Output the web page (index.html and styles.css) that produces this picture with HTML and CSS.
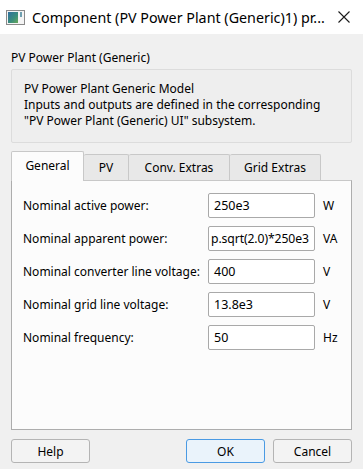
FILE: index.html
```html
<!DOCTYPE html>
<html lang="en">
<head>
    <meta charset="UTF-8">
    <title>Component (PV Power Plant (Generic)1) properties</title>
    <link rel="stylesheet" href="styles.css">
</head>
<body>

    <!-- Window title bar -->
    <div class="titlebar">
        <svg class="app-icon" width="19" height="15" viewBox="0 0 19 15">
            <defs>
                <linearGradient id="ig" x1="0" y1="0" x2="1" y2="1">
                    <stop offset="0" stop-color="#2f6fa0"/>
                    <stop offset="0.6" stop-color="#3b8f7a"/>
                    <stop offset="1" stop-color="#6aa85a"/>
                </linearGradient>
            </defs>
            <rect x="0.5" y="0.5" width="18" height="14" fill="#f4f4f4" stroke="#8a8a8a"/>
            <rect x="2" y="2" width="10" height="11" fill="url(#ig)"/>
            <rect x="14" y="2" width="2" height="5" fill="#6f9fb0"/>
        </svg>
        <div class="title-text">Component (PV Power Plant (Generic)1) pr...</div>
        <svg class="close-x" width="12" height="12" viewBox="0 0 12 12">
            <path d="M0.5 0.5 L11.5 11.5 M11.5 0.5 L0.5 11.5" stroke="#1a1a1a" stroke-width="1.1"/>
        </svg>
    </div>

    <div class="content">
        <div class="group-label">PV Power Plant (Generic)</div>

        <div class="desc-box">
            PV Power Plant Generic Model<br>
            Inputs and outputs are defined in the corresponding<br>
            "PV Power Plant (Generic) UI" subsystem.
        </div>

        <!-- Tabs -->
        <div class="tabs">
            <div class="tab active" style="width: 73px;">General</div>
            <div class="tab" style="width: 45px;">PV</div>
            <div class="tab" style="width: 101px;">Conv. Extras</div>
            <div class="tab" style="width: 91px;">Grid Extras</div>
        </div>

        <div class="panel">
            <div class="row">
                <div class="label">Nominal active power:</div>
                <div class="field">250e3</div>
                <div class="unit">W</div>
            </div>
            <div class="row">
                <div class="label">Nominal apparent power:</div>
                <div class="field tight">p.sqrt(2.0)*250e3</div>
                <div class="unit">VA</div>
            </div>
            <div class="row">
                <div class="label">Nominal converter line voltage:</div>
                <div class="field">400</div>
                <div class="unit">V</div>
            </div>
            <div class="row">
                <div class="label">Nominal grid line voltage:</div>
                <div class="field">13.8e3</div>
                <div class="unit">V</div>
            </div>
            <div class="row">
                <div class="label">Nominal frequency:</div>
                <div class="field">50</div>
                <div class="unit">Hz</div>
            </div>
        </div>

        <!-- Dialog buttons -->
        <div class="buttons">
            <button class="btn">Help</button>
            <div class="spacer"></div>
            <button class="btn default">OK</button>
            <button class="btn">Cancel</button>
        </div>
    </div>

</body>
</html>
```

FILE: styles.css
```css
body {
    margin: 0;
    padding: 0;
    width: 363px;
    height: 469px;
    background-color: #f0f0f0;
    color: #000;
    font-family: "Noto Sans", "Open Sans", sans-serif;
    font-size: 12px;
    overflow: hidden;
}

/* Title bar */
.titlebar {
    height: 34px;
    background-color: #fff;
    display: flex;
    align-items: center;
    padding-left: 6px;
}

.app-icon {
    margin-top: 1px;
}

.title-text {
    margin-left: 7px;
    font-size: 14.3px;
    color: #000;
    white-space: nowrap;
}

.close-x {
    margin-left: auto;
    margin-right: 13px;
}

/* Main area */
.content {
    padding: 0 11px;
}

.group-label {
    margin-top: 16px;
    line-height: 16px;
    height: 19px;
}

.desc-box {
    height: 48px;
    padding: 11px 12px 13px 12px;
    line-height: 16px;
    border: 1px solid #dcdcdc;
    border-radius: 2px;
    background-color: #eeeeee;
}

/* Tabs */
.tabs {
    display: flex;
    align-items: flex-end;
    margin-top: 7px;
    height: 30px;
    position: relative;
    z-index: 1;
}

.tab {
    box-sizing: border-box;
    height: 26px;
    display: flex;
    align-items: center;
    justify-content: center;
    background-color: #e8e8e8;
    border: 1px solid #c8c8c8;
    border-bottom: none;
    border-left: none;
    border-radius: 2px 2px 0 0;
}

.tab.active {
    height: 30px;
    background-color: #fcfcfc;
    border-left: 1px solid #c8c8c8;
    padding-bottom: 2px;
    margin-bottom: -1px;
}

.panel {
    box-sizing: border-box;
    height: 250px;
    background-color: #fcfcfc;
    border: 1px solid #adadad;
    border-top-color: #c8c8c8;
    padding: 12px 0 0 11px;
    display: flex;
    flex-direction: column;
    gap: 8px;
}

.row {
    display: flex;
    align-items: center;
    height: 25px;
}

.label {
    width: 185px;
    white-space: nowrap;
}

.field {
    box-sizing: border-box;
    width: 107px;
    height: 25px;
    border: 1px solid #a9a9a9;
    border-radius: 2px;
    background-color: #fff;
    padding: 0 5px;
    display: flex;
    align-items: center;
    white-space: nowrap;
    font-size: 12.5px;
}

.field.tight {
    padding: 0 2px;
    font-size: 12.2px;
    letter-spacing: -0.1px;
}

.unit {
    margin-left: 8px;
}

/* Buttons */
.buttons {
    display: flex;
    margin-top: 9px;
    gap: 8px;
}

.spacer {
    flex: 1;
}

.btn {
    width: 79px;
    height: 24px;
    font-family: inherit;
    font-size: 12px;
    color: #000;
    background-color: #f3f3f3;
    border: 1px solid #b4b4b4;
    border-radius: 3px;
    padding: 0;
}

.btn.default {
    background-color: #eaf3fb;
    border-color: #4a9ae3;
}
```
